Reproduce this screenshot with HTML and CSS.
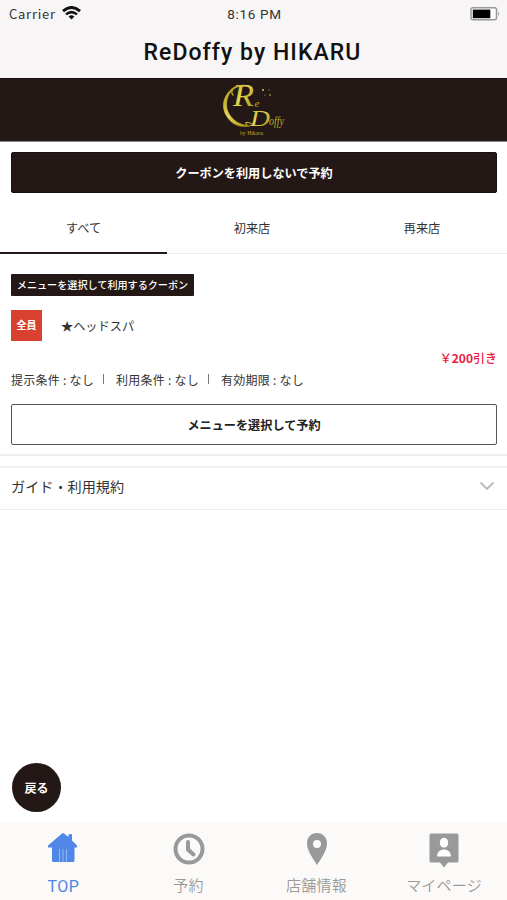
FILE: index.html
```html
<!DOCTYPE html>
<html lang="ja">
<head>
<meta charset="utf-8">
<title>ReDoffy by HIKARU</title>
<link rel="stylesheet" href="styles.css">
</head>
<body>
<div class="app">
  <header class="header">
    <div class="status">
      <div class="carrier"><span>Carrier</span>
        <svg width="19" height="14" viewBox="0 0 19 14" fill="none" stroke="#111"><path d="M1 5.200Q9.500-2.200 18 5.200" stroke-width="3"/><path d="M4 8.400Q9.500 3.800 15 8.400" stroke-width="2.500"/><path d="M6.600 10.500Q9.500 8.100 12.400 10.500L9.500 13.400Z" fill="#111" stroke="none"/></svg>
      </div>
      <div class="time">8:16 PM</div>
      <svg class="battery" width="30" height="14" viewBox="0 0 30 14"><rect x="1" y=".8" width="25.500" height="12" rx="2" fill="#fff" stroke="#999" stroke-width="1.500"/><rect x="2.800" y="2.600" width="17.500" height="8.600" fill="#000"/><path d="M28 4.800q2 2 0 4z" fill="#999"/></svg>
    </div>
    <h1 class="title">ReDoffy by HIKARU</h1>
  </header>
  <div class="banner">
    <svg class="logo" width="74" height="60" viewBox="-4 0 74 60">
      <defs><linearGradient id="gold" x1="0" y1="0" x2="1" y2="1"><stop offset="0" stop-color="#a99513"/><stop offset=".45" stop-color="#e6d653"/><stop offset="1" stop-color="#a58c0b"/></linearGradient></defs>
      <path d="M17 6C4 12-1 25 5 36C10 45 18 49 29 47C19 46 12 42 7.500 34C3 25 6 13 17 6Z" fill="url(#gold)" stroke="url(#gold)" stroke-width=".6"/>
      <path d="M12 16C8 12 14 6.500 23 6.500M26 46C22 43 28 42 32 46" fill="none" stroke="url(#gold)" stroke-width="1.400" stroke-linecap="round"/>
      <g class="logo-text">
        <text class="initial" x="12" y="27" font-size="31" textLength="21" lengthAdjust="spacingAndGlyphs">R</text>
        <text x="33.500" y="28" font-size="11">e</text>
        <text class="initial" x="29" y="47" font-size="24" textLength="20" lengthAdjust="spacingAndGlyphs">D</text>
        <text x="48" y="46" font-size="13" textLength="15" lengthAdjust="spacingAndGlyphs">offy</text>
        <text class="byline" x="19" y="55.500" font-size="6" textLength="23" lengthAdjust="spacingAndGlyphs">by Hikaru</text>
      </g>
      <g fill="#dac763"><circle cx="42" cy="11" r="1"/><circle cx="49" cy="16" r=".8"/><circle cx="48" cy="11" r=".5"/><circle cx="44" cy="16" r=".5"/></g>
    </svg>
  </div>
  <main class="content">
    <button class="primary">クーポンを利用しないで予約</button>
    <nav class="tabs"><a class="tab active">すべて</a><a class="tab">初来店</a><a class="tab">再来店</a></nav>
    <section class="coupon">
      <span class="label">メニューを選択して利用するクーポン</span>
      <div class="coupon-name"><span class="target">全員</span><span>★ヘッドスパ</span></div>
      <div class="price">￥<b>200</b>引き</div>
      <div class="conditions"><span>提示条件 : なし</span><i></i><span>利用条件 : なし</span><i></i><span>有効期限 : なし</span></div>
      <button class="outline">メニューを選択して予約</button>
    </section>
    <div class="guide"><span>ガイド・利用規約</span><svg width="16" height="10" viewBox="0 0 16 10"><path d="M1.500 1.500L8 8L14.500 1.500" fill="none" stroke="#bbb" stroke-width="1.900"/></svg></div>
  </main>
  <button class="back">戻る</button>
  <footer class="bottom-nav">
    <a class="nav-item selected"><svg width="32" height="34" viewBox="0 0 32 34"><path fill="currentColor" d="M1 15.500V13.500L15 1.500Q16 .7 17 1.500L21.500 5V2.200H25V8.500L30 13.500V15.500H27.500V28.500Q27.500 30 26 30H6.500Q5 30 5 28.500V15.500Z"/><path d="M12.500 17V30M16 17V30M19.500 17V30" stroke="#a9c4f5" stroke-width=".8"/></svg><span>TOP</span></a>
    <a class="nav-item"><svg width="32" height="34" viewBox="0 0 32 34" fill="none" stroke="currentColor"><circle cx="16" cy="17" r="13.500" stroke-width="4"/><path d="M15 10V17.500L20.500 22.500" stroke-width="4" stroke-linecap="round"/></svg><span>予約</span></a>
    <a class="nav-item"><svg width="32" height="34" viewBox="0 0 32 34" fill="currentColor"><path fill-rule="evenodd" d="M16 1C10 1 6 5.500 6 11.500C6 18.500 12 26.500 16 33C20 26.500 26 18.500 26 11.500C26 5.500 22 1 16 1ZM16 8A4 4 0 1 1 16 16A4 4 0 1 1 16 8Z"/></svg><span>店舗情報</span></a>
    <a class="nav-item"><svg width="32" height="36" viewBox="0 0 32 36"><path fill="currentColor" d="M3 2.500H29Q30.500 2.500 30.500 4V30Q30.500 31.500 29 31.500H20L16 36.500L12 31.500H3Q1.500 31.500 1.500 30V4Q1.500 2.500 3 2.500Z"/><ellipse cx="16" cy="11.800" rx="4.200" ry="5" fill="#fff"/><path d="M9 25.500C9 16 23 16 23 25.500Z" fill="#fff"/></svg><span>マイページ</span></a>
  </footer>
</div>
</body>
</html>
```

FILE: styles.css
```css
* { box-sizing: border-box; }
body { margin: 0; background: #fff; color: #333; font-family: "Noto Sans CJK JP", sans-serif; font-size: 12px; }
button { font-family: inherit; padding: 0; }
svg { display: block; flex-shrink: 0; }
.app { height: 900px; display: flex; flex-direction: column; position: relative; overflow: hidden; }
.header { height: 78px; background: #f7f5f6; flex-shrink: 0; }
.status { height: 28px; display: grid; grid-template-columns: 1fr auto 1fr; align-items: center; padding: 0 7px 0 9px; font-size: 13px; letter-spacing: .75px; color: #333; }
.carrier { display: flex; align-items: center; gap: 6px; }
.carrier span { margin-top: -2px; }
.carrier svg { margin-top: -2px; }
.time { font-family: Roboto, sans-serif; font-size: 13.5px; letter-spacing: .7px; }
.battery { justify-self: end; margin-top: -1px; }
.title { margin: 0; height: 48px; line-height: 49px; text-align: center; font-family: Roboto, sans-serif; font-size: 23px; font-weight: 500; letter-spacing: 1.05px; color: #111; padding-right: 2px; }
.banner { height: 64px; background: #231815; border-top: 1px solid #171010; border-bottom: 1px solid #888; display: flex; justify-content: center; flex-shrink: 0; padding-left: 1px; }
.logo { overflow: visible; }
.logo-text { fill: #bda723; font-family: "Liberation Serif", serif; font-style: italic; }
.initial { fill: url(#gold); }
.byline { font-style: normal; }
.content { flex: 1; }
.primary { display: block; width: 486px; height: 41px; margin: 10px 0 0 11px; border: 1px solid #171010; border-radius: 2px; background: #231815; color: #fff; font-size: 12.15px; font-weight: 700; }
.tabs { display: grid; grid-template-columns: 167px 170px 170px; height: 61px; border-bottom: 1px solid #eee; }
.tab { text-align: center; line-height: 69px; height: 61px; font-size: 12.15px; }
.active { border-bottom: 2px solid #231815; }
.coupon { height: 202px; padding: 20px 10px 0 11px; border-bottom: 2px solid #eee; display: flex; flex-direction: column; align-items: flex-start; }
.label { width: 183px; height: 22px; line-height: 21px; text-align: center; border-radius: 1px; background: #231815; color: #fff; font-size: 10.1px; font-weight: 500; white-space: nowrap; }
.coupon-name { display: flex; align-items: center; gap: 19px; height: 31px; margin-top: 14px; font-size: 12.2px; }
.target { width: 31px; height: 31px; background: #d8412f; color: #fff; font-size: 10px; line-height: 30px; text-align: center; font-weight: 700; }
.price { align-self: flex-end; height: 20px; line-height: 19px; margin-top: 7px; color: #ed1941; font-size: 12px; font-weight: 500; }
.conditions { display: flex; align-items: center; height: 20px; margin-top: 1px; font-size: 12px; letter-spacing: .25px; white-space: nowrap; }
.conditions i { width: 1px; height: 10px; margin: 0 12px 0 9px; background: #777; }
.outline { width: 486px; height: 41px; margin-top: 15px; background: #fff; border: 1px solid #555; border-radius: 2px; color: #222; font-size: 12.15px; font-weight: 700; }
.guide { display: flex; align-items: center; justify-content: space-between; height: 44px; margin-top: 10px; border-top: 2px solid #f0f0f0; border-bottom: 1px solid #eee; padding: 0 12px 6px 11px; font-size: 14.15px; }
.back { position: absolute; left: 12px; top: 763px; width: 49px; height: 49px; border-radius: 50%; border: 0; background: #231815; color: #fff; font-size: 12px; font-weight: 700; }
.bottom-nav { height: 78px; background: #fbfaf8; display: grid; grid-template-columns: 125px 127px 129px 126px; flex-shrink: 0; padding-top: 9px; }
.nav-item { display: flex; flex-direction: column; align-items: center; color: #999; font-size: 15px; font-weight: 350; letter-spacing: .2px; }
.nav-item svg { height: 36px; overflow: visible; }
.nav-item span { line-height: 22px; margin-top: 7px; }
.selected { color: #4f86e8; font-family: Roboto, sans-serif; font-size: 16px; font-weight: 400; letter-spacing: .5px; }
.selected span { margin-top: 9px; padding-left: 2px; }
```
